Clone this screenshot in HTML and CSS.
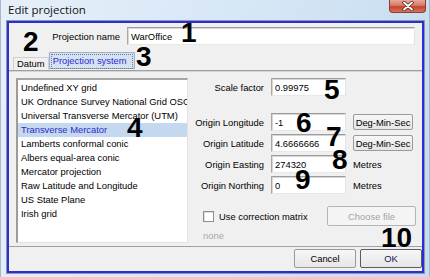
FILE: index.html
```html
<!DOCTYPE html>
<html>

<head>
    <meta charset="UTF-8">
    <link rel="stylesheet" href="styles.css">
</head>

<body>
    <div class="window">
        <div class="titlebar">
            <span class="title">Edit projection</span>
            <span class="close">
                <svg width="12" height="10" viewBox="0 0 12 10">
                    <path d="M2 1.5 L10 8.5 M10 1.5 L2 8.5" stroke="#5a2a22" stroke-width="3.4" stroke-linecap="round" />
                    <path d="M2 1.5 L10 8.5 M10 1.5 L2 8.5" stroke="#ffffff" stroke-width="1.8" stroke-linecap="round" />
                </svg>
            </span>
        </div>

        <div class="client">
            <div class="name-row">
                <label>Projection name</label>
                <div class="field wide">WarOffice</div>
            </div>

            <ul class="tabs">
                <li>Datum</li>
                <li class="current"><span>Projection system</span></li>
            </ul>

            <div class="panel">
                <ul class="list">
                    <li>Undefined XY grid</li>
                    <li>UK Ordnance Survey National Grid OSGB</li>
                    <li>Universal Transverse Mercator (UTM)</li>
                    <li class="current">Transverse Mercator</li>
                    <li>Lamberts conformal conic</li>
                    <li>Albers equal-area conic</li>
                    <li>Mercator projection</li>
                    <li>Raw Latitude and Longitude</li>
                    <li>US State Plane</li>
                    <li>Irish grid</li>
                </ul>

                <div class="params">
                    <div class="row">
                        <label>Scale factor</label>
                        <div class="field">0.99975</div>
                    </div>
                    <div class="row gap">
                        <label>Origin Longitude</label>
                        <div class="field">-1</div>
                        <button class="btn small">Deg-Min-Sec</button>
                    </div>
                    <div class="row">
                        <label>Origin Latitude</label>
                        <div class="field">4.6666666</div>
                        <button class="btn small">Deg-Min-Sec</button>
                    </div>
                    <div class="row">
                        <label>Origin Easting</label>
                        <div class="field">274320</div>
                        <span class="unit">Metres</span>
                    </div>
                    <div class="row">
                        <label>Origin Northing</label>
                        <div class="field">0</div>
                        <span class="unit">Metres</span>
                    </div>
                    <div class="check-row">
                        <span class="checkbox"></span>
                        <span>Use correction matrix</span>
                        <button class="btn choose" disabled>Choose file</button>
                    </div>
                    <div class="none">none</div>
                </div>
            </div>

            <div class="actions">
                <button class="btn">Cancel</button>
                <button class="btn default">OK</button>
            </div>
        </div>
    </div>

    <!-- callout numbers drawn over the dialog -->
    <span class="mark m1">1</span>
    <span class="mark m2">2</span>
    <span class="mark m3">3</span>
    <span class="mark m4">4</span>
    <span class="mark m5">5</span>
    <span class="mark m6">6</span>
    <span class="mark m7">7</span>
    <span class="mark m8">8</span>
    <span class="mark m9">9</span>
    <span class="mark m10">10</span>
</body>

</html>
```

FILE: styles.css
```css
html, body {
    margin: 0;
    padding: 0;
}

body {
    width: 430px;
    height: 277px;
    overflow: hidden;
    position: relative;
    font-family: "Liberation Sans", Arial, sans-serif;
    font-size: 9.4px;
    color: #000;
    background: linear-gradient(100deg, #e6eff9 0%, #d9e8f6 45%, #c6dcf0 100%);
}

.window {
    box-sizing: border-box;
    width: 430px;
    height: 277px;
    border-left: 1px solid #a9b8c8;
    border-right: 1px solid #a9b8c8;
}

.titlebar {
    display: flex;
    align-items: flex-start;
    height: 21px;
    position: relative;
}

.title {
    margin: 2px 0 0 7px;
    font-family: "Open Sans", sans-serif;
    font-size: 11.5px;
    line-height: 16px;
    color: #111;
}

.close {
    position: absolute;
    left: 388px;
    top: 0;
    width: 37px;
    height: 13px;
    box-sizing: border-box;
    border: 1px solid #8e3b30;
    border-top: 0;
    border-radius: 0 0 4px 4px;
    background: linear-gradient(#e9a898 0%, #d77a66 45%, #c4452f 55%, #d4735c 100%);
    display: flex;
    align-items: center;
    justify-content: center;
}

.client {
    box-sizing: border-box;
    margin-left: 6px;
    width: 417px;
    height: 252px;
    border: 2px solid #2d2dd8;
    box-shadow: 0 0 0 1px #8a98a8;
    background: #f0f0f0;
}

/* projection name */
.name-row {
    display: flex;
    align-items: center;
    margin-top: 4px;
    height: 18px;
}

.name-row label {
    width: 111px;
    text-align: right;
    margin-right: 7px;
}

.field {
    box-sizing: border-box;
    height: 18px;
    width: 75px;
    padding: 3px 0 0 3px;
    background: #fff;
    border: 1px solid;
    border-color: #9c9c9c #e3e3e3 #e8e8e8 #a8a8a8;
    box-shadow: inset 1px 1px #d6d6d6;
    line-height: 11px;
}

.field.wide {
    width: 288px;
}

/* tabs */
.tabs {
    display: flex;
    align-items: flex-end;
    margin: 7px 0 0 0;
    padding: 0 0 0 4px;
    list-style: none;
    height: 18px;
}

.tabs li {
    box-sizing: border-box;
    height: 13px;
    padding: 0 3px;
    line-height: 12px;
    border: 1px solid #d0d0d0;
    border-bottom: 0;
}

.tabs li.current {
    height: 17px;
    margin-bottom: 1px;
    padding: 1px;
    color: #2a2ad6;
    background: #d7e2f1;
    border: 1px solid #9fb1c9;
}

.tabs li.current span {
    display: block;
    height: 13px;
    padding: 0 5px 0 1px;
    line-height: 12px;
    border: 1px dotted #6c7c94;
}

/* panel */
.panel {
    box-sizing: border-box;
    display: flex;
    align-items: flex-start;
    height: 177px;
    border-top: 1px solid #a0a0a0;
    border-bottom: 1px solid #a0a0a0;
    box-shadow: inset 0 1px #d4d4d4;
}

.list {
    box-sizing: border-box;
    width: 172px;
    height: 165px;
    margin: 7px 0 0 7px;
    padding: 1px 0 0 0;
    list-style: none;
    background: #fff;
    border-style: solid;
    border-width: 2px 1px 1px 2px;
    border-color: #a6a6a6 #e2e2e2 #e2e2e2 #9c9c9c;
    overflow: hidden;
}

.list li {
    height: 14px;
    line-height: 14px;
    padding-left: 3px;
    white-space: nowrap;
}

.list li.current {
    background: #c4d8ef;
    color: #2c2cc6;
}

.params {
    width: 221px;
    margin: 7px 0 0 7px;
}

.row {
    display: flex;
    align-items: center;
    height: 18px;
    margin-top: 3px;
}

.row:first-child {
    margin-top: 0;
}

.row.gap {
    margin-top: 17px;
}

.row label {
    width: 69px;
    margin-right: 7px;
    text-align: right;
    white-space: nowrap;
}

.row .btn,
.row .unit {
    margin-left: 7px;
}

.btn {
    box-sizing: border-box;
    font-family: "Liberation Sans", Arial, sans-serif;
    font-size: 9.4px;
    color: #000;
    padding: 0;
    background: linear-gradient(#f7f7f7, #e6e6e6);
    border: 1px solid #9a9a9a;
    border-radius: 2px;
}

.btn.small {
    width: 60px;
    height: 16px;
}

.check-row {
    display: flex;
    align-items: center;
    height: 20px;
    margin-top: 12px;
}

.checkbox {
    box-sizing: border-box;
    width: 11px;
    height: 11px;
    margin: 0 5px 0 8px;
    background: #fff;
    border: 1px solid #8f8f8f;
    box-shadow: inset 1px 1px #dcdcdc;
}

.btn.choose {
    margin-left: auto;
    width: 89px;
    height: 20px;
    color: #a3a3a3;
    background: #f4f4f4;
    border-color: #b5b5b5;
}

.none {
    margin: 4px 0 0 8px;
    line-height: 12px;
    color: #a8a8a8;
}

/* bottom buttons */
.actions {
    display: flex;
    justify-content: flex-end;
    gap: 4px;
    padding-top: 2px;
}

.actions .btn {
    width: 62px;
    height: 19px;
}

.actions .btn.default {
    border-color: #5c5c5c;
    color: #14145a;
}

/* callout numbers */
.mark {
    position: absolute;
    font-family: "Liberation Sans", Arial, sans-serif;
    font-weight: bold;
    font-size: 28px;
    line-height: 28px;
    color: #000;
}

.m1 { left: 181px; top: 19px; }
.m2 { left: 23px; top: 28px; }
.m3 { left: 136px; top: 43px; }
.m4 { left: 127px; top: 114px; }
.m5 { left: 324px; top: 76px; }
.m6 { left: 296px; top: 109px; }
.m7 { left: 326px; top: 123px; }
.m8 { left: 332px; top: 146px; }
.m9 { left: 295px; top: 166px; }
.m10 { left: 381px; top: 224px; }
```
